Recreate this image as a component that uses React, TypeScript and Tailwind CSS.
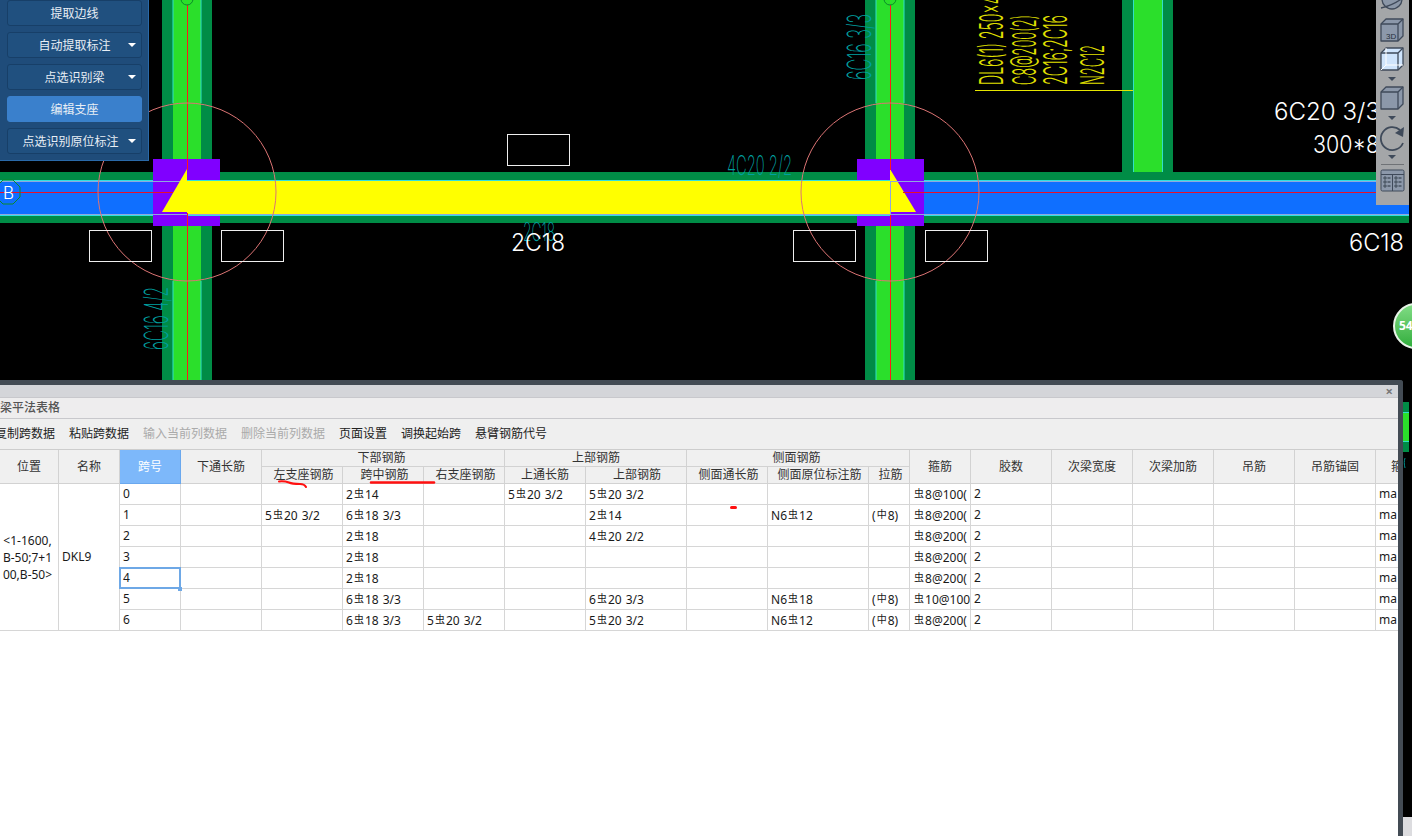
import React from "react";

const colWidths = [59, 61, 61, 81, 81, 81, 81, 81, 101, 81, 101, 41, 61, 81, 81, 81, 81, 81, 23];

// 每行跨数据，"~" 代表钢筋符号
const rows = [
  { span: "0", bottomLeft: "", bottomMid: "2~14", bottomRight: "", topLong: "5~20 3/2", top: "5~20 3/2", side: "", tie: "", stirrup: "~8@100(" },
  { span: "1", bottomLeft: "5~20 3/2", bottomMid: "6~18 3/3", bottomRight: "", topLong: "", top: "2~14", side: "N6~12", tie: "(#8)", stirrup: "~8@200(" },
  { span: "2", bottomLeft: "", bottomMid: "2~18", bottomRight: "", topLong: "", top: "4~20 2/2", side: "", tie: "", stirrup: "~8@200(" },
  { span: "3", bottomLeft: "", bottomMid: "2~18", bottomRight: "", topLong: "", top: "", side: "", tie: "", stirrup: "~8@200(" },
  { span: "4", bottomLeft: "", bottomMid: "2~18", bottomRight: "", topLong: "", top: "", side: "", tie: "", stirrup: "~8@200(" },
  { span: "5", bottomLeft: "", bottomMid: "6~18 3/3", bottomRight: "", topLong: "", top: "6~20 3/3", side: "N6~18", tie: "(#8)", stirrup: "~10@100" },
  { span: "6", bottomLeft: "", bottomMid: "6~18 3/3", bottomRight: "5~20 3/2", topLong: "", top: "5~20 3/2", side: "N6~12", tie: "(#8)", stirrup: "~8@200(" },
];

// 钢筋符号用小号字体上移显示
function Rebar({ value }: { value: string }) {
  const parts = value.split(/([~#])/);
  return (
    <>
      {parts.map((p, i) =>
        p === "~" ? (
          <span key={i} className="text-[10px] align-[2px] mx-[1px]">虫</span>
        ) : p === "#" ? (
          <span key={i} className="text-[10px] align-[2px] mx-[1px]">中</span>
        ) : (
          <span key={i} className="[word-spacing:1px]">{p}</span>
        )
      )}
    </>
  );
}

function Th({ children, rowSpan, colSpan, active, className = "" }: { children: React.ReactNode; rowSpan?: number; colSpan?: number; active?: boolean; className?: string }) {
  return (
    <th
      rowSpan={rowSpan}
      colSpan={colSpan}
      className={`border-r border-b p-0 font-normal text-center text-[12px] leading-none overflow-hidden whitespace-nowrap ${
        active ? "bg-[#7db8fa] text-white border-[#6aa8ee]" : "bg-[#f0f0f0] text-[#333333] border-[#d2d2d2]"
      } ${className}`}
    >
      {children}
    </th>
  );
}

function Td({ children, className = "" }: { children?: React.ReactNode; className?: string }) {
  return (
    <td className={`h-[21px] border-r border-b border-[#d6d6d6] pl-[3px] pr-0 py-0 text-[12px] leading-none text-[#1a1a1a] overflow-hidden whitespace-nowrap ${className}`}>
      {children}
    </td>
  );
}

function PanelButton({ label, arrow, active, className = "" }: { label: string; arrow?: boolean; active?: boolean; className?: string }) {
  return (
    <button
      className={`relative h-[26px] rounded-[3px] border pt-[1px] text-[12px] text-[#e8eef5] text-center ${
        active ? "bg-[#3a80cc] border-[#3a80cc]" : "bg-[#20507f] border-[#173f68]"
      } ${className}`}
    >
      {label}
      {arrow && <span className="absolute right-[5px] top-[10px] w-0 h-0 border-x-[4px] border-x-transparent border-t-[4px] border-t-white" />}
    </button>
  );
}

function Column({ x }: { x: number }) {
  return (
    <g>
      <rect x={x} y="0" width="50" height="380" fill="#008c46" />
      <rect x={x + 11} y="0" width="28" height="380" fill="#2bdf2b" />
      <path d={`M${x + 11} 0V103M${x + 39} 0V103M${x + 11} 281V380M${x + 39} 281V380`} stroke="#2fe0c8" strokeWidth="1" />
    </g>
  );
}

function CadCanvas() {
  const thin = "Inter, 'Liberation Sans', sans-serif";
  return (
    <svg width="1412" height="380" viewBox="0 0 1412 380" className="block bg-black">
      <Column x={162} />
      <Column x={865} />
      <rect x="1122" y="0" width="51" height="175" fill="#008c46" />
      <rect x="1134" y="0" width="28" height="181" fill="#2bdf2b" />
      <path d="M1133.5 0V181M1162.5 0V181" stroke="#2fe0c8" />

      <rect x="0" y="172" width="1409" height="51" fill="#008c46" />
      <rect x="0" y="180" width="1409" height="36" fill="#0f6fff" />
      <path d="M0 180.5H1409M0 215.5H1409" stroke="#2fe0e0" />
      <path d="M0 181.5H1409M0 214.5H1409" stroke="#8fa8dc" />

      <rect x="153" y="159" width="67" height="67" fill="#8000ff" />
      <rect x="857" y="159" width="67" height="67" fill="#8000ff" />
      <path d="M153 181.5H220M153 214.5H220M857 181.5H924M857 214.5H924" stroke="#8fa8dc" />

      <rect x="187" y="181" width="703" height="33" fill="#ffff00" />
      <polygon points="187,169 162,212 187,212" fill="#ffff00" />
      <polygon points="890,169 916,212 890,212" fill="#ffff00" />
      <path d="M187 180.5H890M187 215.5H890" stroke="#2fe0e0" />
      <path d="M890 181.5H916M890 214.5H916M187 214.5H170" stroke="#8fa8dc" />
      <path d="M890.5 181V214" stroke="#8fa8dc" />

      <rect x="187" y="0" width="1" height="170" fill="#ff1a1a" />
      <rect x="187" y="213" width="1" height="167" fill="#ff1a1a" />
      <rect x="890" y="0" width="1" height="170" fill="#ff1a1a" />
      <rect x="890" y="215" width="1" height="165" fill="#ff1a1a" />
      <path d="M0 192.5H173M903 192.5H1376" stroke="#e8102a" />

      <circle cx="187" cy="192" r="89" fill="none" stroke="#dc7474" />
      <circle cx="890" cy="192" r="89" fill="none" stroke="#dc7474" />

      {[[89, 230], [221, 230], [507, 134], [793, 230], [925, 230]].map(([x, y]) => (
        <rect key={`${x}-${y}`} x={x + 0.5} y={y + 0.5} width="62" height="31" fill="none" stroke="#eeeeee" />
      ))}

      <circle cx="187" cy="-1" r="6" fill="#2bdf2b" stroke="#0a8a2a" />
      <circle cx="890" cy="-1" r="6" fill="#2bdf2b" stroke="#0a8a2a" />

      <polygon points="3,180 13,180 20,187 20,197 13,204 3,204 -4,197 -4,187" fill="none" stroke="#0a8a2a" />
      <text x="3" y="199" fontFamily={thin} fontWeight="300" fontSize="17" fill="#ffffff" textLength="11" lengthAdjust="spacingAndGlyphs">B</text>

      <text x="523" y="241" fontFamily={thin} fontWeight="200" fontSize="26" fill="#00a0a0" textLength="32" lengthAdjust="spacingAndGlyphs">2C18</text>
      <text x="511" y="251" fontFamily={thin} fontWeight="300" fontSize="24" fill="#ffffff" textLength="54" lengthAdjust="spacingAndGlyphs">2C18</text>
      <text x="727" y="175" fontFamily={thin} fontWeight="200" fontSize="27" fill="#00a0a0" textLength="65" lengthAdjust="spacingAndGlyphs">4C20 2/2</text>
      <text x="1349" y="251" fontFamily={thin} fontWeight="300" fontSize="24" fill="#ffffff" textLength="55" lengthAdjust="spacingAndGlyphs">6C18</text>
      <text x="1274" y="120" fontFamily={thin} fontWeight="300" fontSize="24" fill="#ffffff" textLength="106" lengthAdjust="spacingAndGlyphs">6C20 3/3</text>
      <text x="1313" y="153" fontFamily={thin} fontWeight="300" fontSize="24" fill="#ffffff" textLength="66" lengthAdjust="spacingAndGlyphs">300*8</text>

      <text transform="translate(871 80) rotate(-90)" fontFamily={thin} fontWeight="200" fontSize="33" fill="#00a0a0" textLength="66" lengthAdjust="spacingAndGlyphs">6C16 3/3</text>
      <text transform="translate(168 350) rotate(-90)" fontFamily={thin} fontWeight="200" fontSize="33" fill="#00a0a0" textLength="63" lengthAdjust="spacingAndGlyphs">6C16 4/2</text>

      <text transform="translate(1003 85) rotate(-90)" fontFamily={thin} fontWeight="300" fontSize="32" fill="#e0e000" textLength="107" lengthAdjust="spacingAndGlyphs">DL6(1) 250x400</text>
      <text transform="translate(1036 85) rotate(-90)" fontFamily={thin} fontWeight="300" fontSize="32" fill="#e0e000" textLength="70" lengthAdjust="spacingAndGlyphs">C8@200(2)</text>
      <text transform="translate(1067 85) rotate(-90)" fontFamily={thin} fontWeight="300" fontSize="32" fill="#e0e000" textLength="70" lengthAdjust="spacingAndGlyphs">2C16;2C16</text>
      <text transform="translate(1104 85) rotate(-90)" fontFamily={thin} fontWeight="300" fontSize="32" fill="#e0e000" textLength="40" lengthAdjust="spacingAndGlyphs">N2C12</text>
      <path d="M975 90.5H1133" stroke="#e6e600" />
    </svg>
  );
}

function Box({ y, fill, light }: { y: number; fill: string; light?: boolean }) {
  const s = "#3f4a5a";
  return (
    <g stroke={s} strokeWidth="1.3" strokeLinejoin="round">
      <polygon points={`5,${y + 5} 10,${y} 27,${y} 27,${y + 17} 22,${y + 22} 5,${y + 22}`} fill={fill} />
      <path d={`M5 ${y + 5}H22V${y + 22}M22 ${y + 5}L27 ${y}`} fill="none" />
      {light && <path d={`M10 ${y}V${y + 17}H27M10 ${y + 17}L5 ${y + 22}`} fill="none" stroke="#ffffff" strokeWidth="1" />}
    </g>
  );
}

function ViewToolbar() {
  const caret = (y: number) => <polygon points={`12,${y} 20,${y} 16,${y + 4}`} fill="#3f4a5a" />;
  return (
    <svg width="33" height="205" viewBox="0 0 33 205" className="absolute left-[1376px] top-0 bg-[#a4a6a8]">
      <circle cx="16" cy="-1" r="10" fill="#8b97a8" stroke="#3f4a5a" strokeWidth="1.3" />
      <path d="M5 8C14 6 23 1 28 -3" stroke="#3f4a5a" strokeWidth="1.3" fill="none" />
      <Box y={19} fill="#8c98aa" />
      <text x="10" y="39" fontSize="8" fontFamily="'Liberation Sans', sans-serif" fill="#26303c">3D</text>
      <Box y={48} fill="#cfe4fc" light />
      {caret(77)}
      <Box y={87} fill="#8c98aa" />
      {caret(116)}
      <path d="M24 130A11.5 11.5 0 1 0 27 143" fill="none" stroke="#3f4a5a" strokeWidth="1.8" />
      <polygon points="19,133 28,127 27,137" fill="#3f4a5a" />
      {caret(155)}
      <path d="M5 164.5H28" stroke="#6f7276" />
      <rect x="5" y="170" width="23" height="21" rx="1.5" fill="#8c98aa" stroke="#3f4a5a" />
      <path d="M5 174.5H28M16.5 175V191" stroke="#3f4a5a" />
      <path d="M8 177h2v2h-2zM8 181h2v2h-2zM8 185h2v2h-2zM19 177h2v2h-2zM19 181h2v2h-2zM19 185h2v2h-2z" fill="none" stroke="#26303c" strokeWidth="0.7" />
      <path d="M11.5 178h3M11.5 182h3M11.5 186h3M22.5 178h3M22.5 182h3M22.5 186h3" stroke="#26303c" />
    </svg>
  );
}

export default function App() {
  return (
    <div className="relative w-[1412px] h-[836px] overflow-hidden bg-black font-['Noto_Sans','Noto_Sans_CJK_SC',sans-serif]">
      <CadCanvas />

      {/* 左上角工具面板 */}
      <div className="absolute left-0 top-0 w-[149px] h-[161px] bg-[#1f4c7a] border-r border-b border-[#2a69a8] flex flex-col gap-[6px] pl-[7px] pr-[6px]">
        <PanelButton label="提取边线" />
        <PanelButton label="自动提取标注" arrow />
        <PanelButton label="点选识别梁" arrow />
        <PanelButton label="编辑支座" active />
        <PanelButton label="点选识别原位标注" arrow className="pr-[8px]" />
      </div>

      <ViewToolbar />

      {/* 右侧绿色数字球 */}
      <div className="absolute left-[1393px] top-[303px] w-[46px] h-[46px] rounded-full border-2 border-[#e8f4e8] bg-gradient-to-b from-[#7fdc84] to-[#2fae3c] text-white font-bold text-[12px] leading-[42px] pl-[4px]">
        54
      </div>

      <div className="flex h-[456px]">
        {/* 梁平法表格窗口 */}
        <div className="relative w-[1403px] flex flex-col bg-white border-t-[5px] border-r-[5px] border-[#434b54] rounded-tr-[3px] overflow-hidden">
          <div className="h-[12px] bg-[#d4d5d9] flex justify-end items-center pr-[5px] text-[13px] leading-none font-bold text-[#777777] shrink-0">×</div>
          <div className="h-[22px] bg-[#eeedee] border-t border-b border-[#c8c8cc] text-[12px] text-[#555555] flex items-center font-medium shrink-0">
            梁平法表格
          </div>
          <div className="h-[31px] bg-[#efefef] border-b border-[#cdcdcd] flex items-center gap-[14px] -ml-[5px] text-[12px] text-[#222222] shrink-0 whitespace-nowrap">
            <span>复制跨数据</span>
            <span>粘贴跨数据</span>
            <span className="text-[#aaaaaa]">输入当前列数据</span>
            <span className="text-[#aaaaaa]">删除当前列数据</span>
            <span>页面设置</span>
            <span>调换起始跨</span>
            <span>悬臂钢筋代号</span>
          </div>

          <table className="table-fixed border-separate border-spacing-0 w-[1398px]">
            <colgroup>
              {colWidths.map((w, i) => (
                <col key={i} span={1} width={w} />
              ))}
            </colgroup>
            <thead>
              <tr className="h-[17px]">
                <Th rowSpan={2}>位置</Th>
                <Th rowSpan={2}>名称</Th>
                <Th rowSpan={2} active>跨号</Th>
                <Th rowSpan={2}>下通长筋</Th>
                <Th colSpan={3} className="pr-[3px]">下部钢筋</Th>
                <Th colSpan={2} className="pl-[1px]">上部钢筋</Th>
                <Th colSpan={3} className="pr-[3px]">侧面钢筋</Th>
                <Th rowSpan={2}>箍筋</Th>
                <Th rowSpan={2}>胶数</Th>
                <Th rowSpan={2}>次梁宽度</Th>
                <Th rowSpan={2}>次梁加筋</Th>
                <Th rowSpan={2}>吊筋</Th>
                <Th rowSpan={2}>吊筋锚固</Th>
                <Th rowSpan={2}><span className="block text-left pl-[15px]">箍筋</span></Th>
              </tr>
              <tr className="h-[17px]">
                <Th className="pl-[3px]">左支座钢筋</Th>
                <Th className="pl-[3px]">跨中钢筋</Th>
                <Th className="pl-[3px]">右支座钢筋</Th>
                <Th>上通长筋</Th>
                <Th className="pl-[2px]">上部钢筋</Th>
                <Th className="pl-[3px]">侧面通长筋</Th>
                <Th className="pl-[3px]">侧面原位标注筋</Th>
                <Th className="pl-[3px]">拉筋</Th>
              </tr>
            </thead>
            <tbody>
              {rows.map((r, i) => (
                <tr key={r.span}>
                  {i === 0 && (
                    <td rowSpan={7} className="border-r border-b border-[#d6d6d6] p-0 pr-[3px] text-[12px] leading-[17px] text-[#1a1a1a] text-center whitespace-nowrap overflow-hidden">
                      <div>&lt;1-1600,</div>
                      <div>B-50;7+1</div>
                      <div>00,B-50&gt;</div>
                    </td>
                  )}
                  {i === 0 && (
                    <td rowSpan={7} className="border-r border-b border-[#d6d6d6] pl-[3px] p-0 text-[12px] text-[#1a1a1a]">DKL9</td>
                  )}
                  {r.span === "4" ? (
                    <td className="relative h-[21px] border-r border-b border-[#d6d6d6] pl-[3px] p-0 text-[12px] leading-none text-[#1a1a1a]">
                      {r.span}
                      <span className="absolute inset-[-1px] border-2 border-[#6ea8e6]" />
                      <span className="absolute right-[-2px] bottom-[-3px] w-[4px] h-[4px] bg-[#6ea8e6]" />
                    </td>
                  ) : (
                    <Td>{r.span}</Td>
                  )}
                  <Td />
                  <Td><Rebar value={r.bottomLeft} /></Td>
                  <Td><Rebar value={r.bottomMid} /></Td>
                  <Td><Rebar value={r.bottomRight} /></Td>
                  <Td><Rebar value={r.topLong} /></Td>
                  <Td><Rebar value={r.top} /></Td>
                  <Td />
                  <Td><Rebar value={r.side} /></Td>
                  <Td><Rebar value={r.tie} /></Td>
                  <Td><Rebar value={r.stirrup} /></Td>
                  <Td>2</Td>
                  <Td />
                  <Td />
                  <Td />
                  <Td />
                  <Td>ma</Td>
                </tr>
              ))}
            </tbody>
          </table>

          {/* 手写的红色批注 */}
          <svg width="1398" height="40" viewBox="0 0 1398 40" className="absolute left-0 top-[95px] pointer-events-none">
            <path d="M279 1.5C283 1 286 1.5 289 2.5C292 4 296 4 300 4C303 4 305 5 306 7" stroke="#ff1010" strokeWidth="2" strokeLinecap="round" fill="none" />
            <path d="M371 2.5H434" stroke="#ff1010" strokeWidth="2.5" strokeLinecap="round" fill="none" />
            <path d="M731.5 27.5H735.5" stroke="#ff1010" strokeWidth="3" strokeLinecap="round" fill="none" />
          </svg>
        </div>

        {/* 窗口右侧露出的 CAD 画面 */}
        <div className="w-[9px] flex flex-col bg-black">
          <svg width="9" height="437" viewBox="0 0 9 437" className="block">
            <rect x="0" y="22" width="6" height="50" fill="#008c46" />
            <rect x="0" y="33" width="6" height="28" fill="#2bdf2b" />
            <path d="M0 32.5H6M0 61.5H6" stroke="#2fe0c8" />
            <path d="M2 78C1 81 1 84 2 88" stroke="#008c8c" fill="none" />
          </svg>
          <div className="h-[19px] bg-[#dcdcdf]" />
        </div>
      </div>
    </div>
  );
}
